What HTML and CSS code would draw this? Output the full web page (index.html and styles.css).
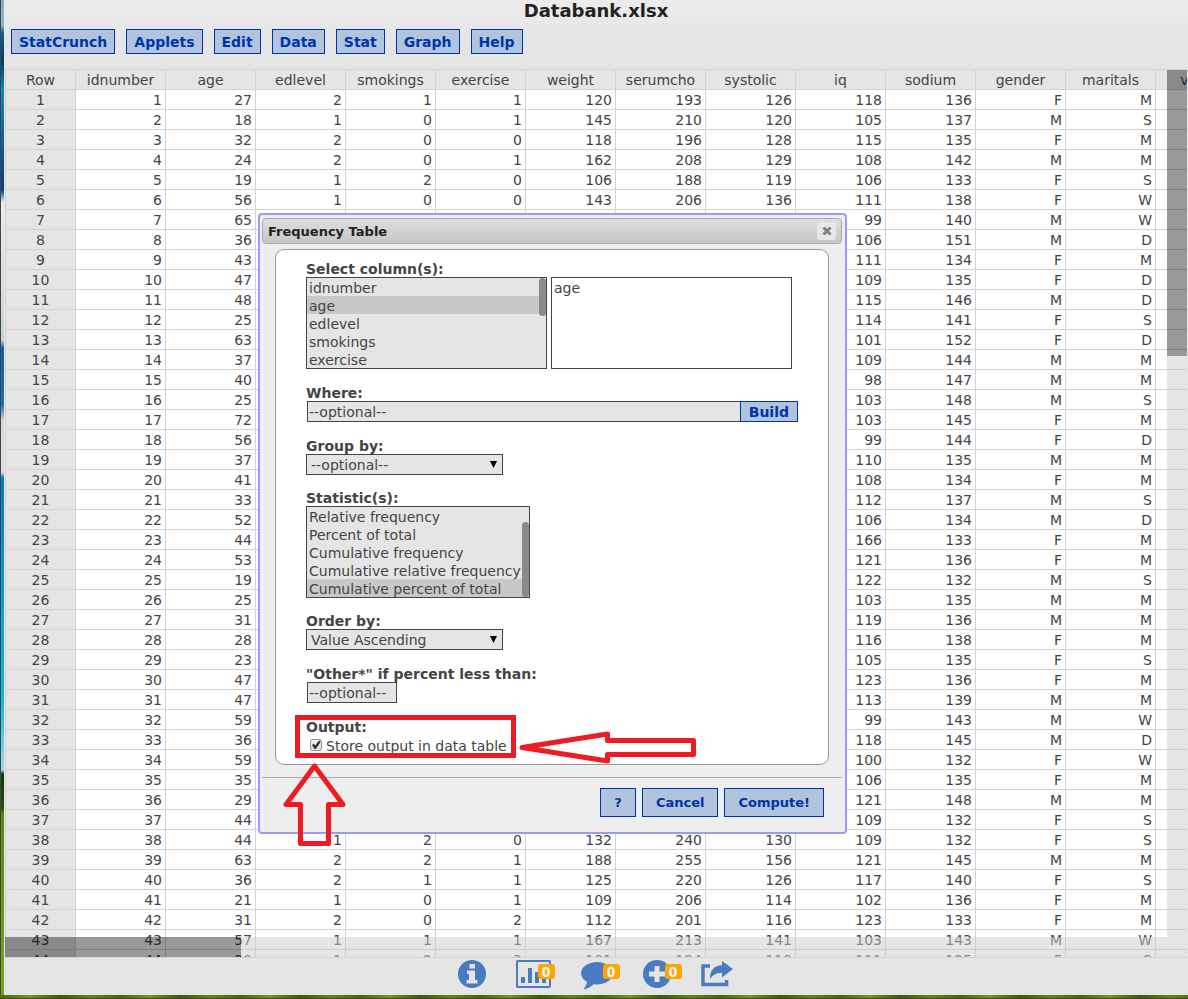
FILE: index.html
```html
<!DOCTYPE html>
<html lang="en">
<head>
<meta charset="utf-8">
<title>Databank.xlsx</title>
<link rel="stylesheet" href="styles.css">
</head>
<body>
<main class="window">
  <header class="header">
    <h1 class="title">Databank.xlsx</h1>
    <nav class="toolbar" aria-label="Main menu">
      <button class="btn" type="button">StatCrunch</button>
      <button class="btn" type="button">Applets</button>
      <button class="btn" type="button">Edit</button>
      <button class="btn" type="button">Data</button>
      <button class="btn" type="button">Stat</button>
      <button class="btn" type="button">Graph</button>
      <button class="btn" type="button">Help</button>
    </nav>
  </header>

  <section class="sheet" aria-label="Data">
    <table class="grid">
      <thead><tr id="grid-head"></tr></thead>
      <tbody id="grid-body"></tbody>
    </table>
    <div class="bar bar-v"><div class="thumb thumb-v"></div><div class="track"></div></div>
    <div class="bar bar-h"><div class="thumb thumb-h"></div><div class="track"></div></div>
  </section>

  <footer class="dock">
    <a class="dock-item" href="#info" aria-label="Info">
      <svg width="28" height="28" viewBox="0 0 28 28"><circle cx="14" cy="14" r="14" fill="#4a7bc0"/><path d="M11.500 4h5.500v4.500h-5.500zM9 10.500h8v9.500h2.500v3.500h-11v-3.500h2.500v-6h-2z" fill="#e5e5e5"/></svg>
    </a>
    <a class="dock-item" href="#graphs" aria-label="Graphs">
      <svg width="35" height="28" viewBox="0 0 35 28" fill="#4a7bc0"><rect x="1" y="1" width="33" height="26" rx="1" fill="none" stroke="#4a7bc0" stroke-width="2"/><path d="M5 17h4v6H5zM12 8h4v15h-4zM19 12h4v11h-4zM26 7h4v16h-4z"/></svg>
      <span class="badge">0</span>
    </a>
    <a class="dock-item" href="#comments" aria-label="Comments">
      <svg width="32" height="30" viewBox="0 0 32 30"><path d="M16 2C7.200 2 0 7 0 13.200c0 3.600 2.400 6.600 6 8.600-.4 2.800-1.600 5-3.600 7.400 4.200-.4 7.600-2.400 10.200-5 1.100.2 2.200.2 3.400.2 8.800 0 16-5 16-11.200S24.800 2 16 2z" fill="#4a7bc0"/></svg>
      <span class="badge">0</span>
    </a>
    <a class="dock-item" href="#add" aria-label="Add">
      <svg width="28" height="28" viewBox="0 0 28 28"><circle cx="14" cy="14" r="14" fill="#4a7bc0"/><path d="M11.500 6h5v5.500H22v5h-5.500V22h-5v-5.500H6v-5h5.500z" fill="#e5e5e5"/></svg>
      <span class="badge">0</span>
    </a>
    <a class="dock-item" href="#share" aria-label="Share">
      <svg width="32" height="28" viewBox="0 0 32 28"><path d="M9 6H2v18.500h23.500V20" fill="none" stroke="#4a7bc0" stroke-width="3.500"/><path d="M21 1l11 8-11 8.500v-4.500c-6 0-9.500 1.800-12 6.500C8.500 11 13 5.500 21 5.300z" fill="#4a7bc0"/></svg>
    </a>
  </footer>
</main>

<form class="dialog" role="dialog" aria-labelledby="dialog-title">
  <div class="dialog-bar">
    <h2 class="dialog-title" id="dialog-title">Frequency Table</h2>
    <button class="close" type="button" aria-label="Close">
      <svg width="10" height="10" viewBox="0 0 10 10"><path d="M1.500 1.500l7 7M8.500 1.500l-7 7" stroke="#808080" stroke-width="3"/></svg>
    </button>
  </div>

  <div class="panel">
    <div class="field">
      <label class="label" for="columns">Select column(s):</label>
      <div class="lists">
        <div class="list-box list-wide">
          <select class="list" id="columns" multiple size="5">
            <option>idnumber</option><option selected>age</option><option>edlevel</option><option>smokings</option><option>exercise</option><option>weight</option><option>serumcho</option><option>systolic</option><option>iq</option><option>sodium</option><option>gender</option><option>maritals</option>
          </select>
          <span class="list-thumb list-thumb-top"></span>
        </div>
        <div class="list-box list-wide">
          <select class="list list-chosen" multiple size="5" aria-label="Chosen columns">
            <option>age</option>
          </select>
        </div>
      </div>
    </div>

    <div class="field">
      <label class="label" for="where">Where:</label>
      <div class="where">
        <input class="input where-input" id="where" type="text" value="--optional--">
        <button class="btn build" type="button">Build</button>
      </div>
    </div>

    <div class="field field-tight">
      <label class="label" for="group">Group by:</label>
      <div class="menu"><select class="menu-select" id="group"><option>--optional--</option></select></div>
    </div>

    <div class="field field-tight">
      <label class="label" for="stats">Statistic(s):</label>
      <div class="list-box list-stats">
        <select class="list" id="stats" multiple size="5">
          <option>Frequency</option><option>Relative frequency</option><option>Percent of total</option><option>Cumulative frequency</option><option>Cumulative relative frequency</option><option selected>Cumulative percent of total</option>
        </select>
        <span class="list-thumb list-thumb-bottom"></span>
      </div>
    </div>

    <div class="field">
      <label class="label" for="order">Order by:</label>
      <div class="menu"><select class="menu-select" id="order"><option>Value Ascending</option></select></div>
    </div>

    <div class="field">
      <label class="label" for="other">"Other*" if percent less than:</label>
      <input class="input other-input" id="other" type="text" value="--optional--">
    </div>

    <div class="field">
      <span class="label">Output:</span>
      <label class="store"><input class="check" type="checkbox" checked>Store output in data table</label>
    </div>
  </div>

  <div class="actions">
    <button class="btn action" type="button">?</button>
    <button class="btn action" type="button">Cancel</button>
    <button class="btn action" type="button">Compute!</button>
  </div>

  <svg class="marks" width="585" height="617" viewBox="260 215 585 617" aria-hidden="true">
    <g fill="none" stroke="#ed1c24" stroke-width="5">
      <rect x="297.500" y="717.500" width="216" height="38"/>
      <path d="M314.500 766L286 804.500h14.500v39h28v-39H343z" stroke-linejoin="round"/>
      <path d="M522 747.500l85.500-13.500v6.500h86v14h-86v6.500z" stroke-linejoin="round"/>
    </g>
  </svg>
</form>
<script src="script.js"></script>
</body>
</html>
```
FILE: styles.css
```css
* { box-sizing: border-box; }

body {
  margin: 0;
  height: 100vh;
  padding: 0 0 4px 4px;
  overflow: hidden;
  position: relative;
  color: #444;
  font: 14px/18px "DejaVu Sans", Verdana, sans-serif;
  background:
    linear-gradient(#444, #444) left bottom / 100% 1px no-repeat,
    linear-gradient(90deg, #3f6a0c, #6c9a14, #345c08, #5c8c12, #3f6a0c) left bottom / 120px 4px repeat-x,
    linear-gradient(#444, #444) left top / 1px 100% no-repeat,
    linear-gradient(#7fb0c8 0, #8fb8cc 25px, #0a6a9c 32px, #083468 60px, #0c88b4 90px, #1270b0 120px, #0a3a78 190px, #e8ecee 202px, #c8d4d8 340px, #0a60b0 348px, #1a70b8 405px, #d0d8dc 420px, #e0e0e0 472px, #0a78c0 478px, #08a0d8 600px, #10b8e0 700px, #a0d8e8 770px, #14380a 774px, #2a4a08 808px, #5c8810 814px, #7aa81c 100%);
}

button, select, input { font: inherit; color: inherit; margin: 0; }

.window {
  height: 100%;
  display: flex;
  flex-direction: column;
  background: #e5e5e5;
}

.header {
  flex: none;
  padding: 0 7px 15px;
  background: linear-gradient(#ececec, #e5e5e5 40px);
}

.title {
  margin: 0 0 8px;
  font-size: 18px;
  line-height: 21px;
  text-align: center;
  color: #222;
}

.toolbar { display: flex; gap: 11px; }

.btn {
  height: 25px;
  padding: 0 7px;
  border: 1px solid #0033aa;
  border-radius: 0;
  background: #b0c4de;
  color: #0033aa;
  font-weight: bold;
  line-height: 18px;
}

.sheet {
  flex: 1;
  min-height: 0;
  margin: 0 1px;
  overflow: hidden;
  position: relative;
  border-top: 1px solid #d3d3d3;
  border-bottom: 1px solid #d3d3d3;
  background: #fff;
}

.grid {
  width: 1151px;
  min-width: 100%;
  table-layout: fixed;
  border-collapse: separate;
  border-spacing: 0;
}

.grid th, .grid td {
  width: 90px;
  height: 20px;
  padding: 2px 3px 0 0;
  border: solid #d3d3d3;
  border-width: 0 1px 1px 0;
  text-align: right;
  line-height: 17px;
  font-weight: normal;
}

.grid thead th { height: 20px; }

.grid th {
  padding: 2px 0 0;
  text-align: center;
  background: #e5e5e5;
}

.grid th:first-child { width: 71px; border-left-width: 1px; }

.bar { position: absolute; display: flex; }
.bar-v { top: 0; right: 0; bottom: 20px; width: 20px; flex-direction: column; }
.bar-h { left: 0; right: 0; bottom: 0; height: 20px; }
.track { flex: 1; background: rgba(204, 204, 204, 0.5); }
.thumb { flex: none; background: rgba(0, 0, 0, 0.4); }
.thumb-v { height: 33%; }
.thumb-h { width: 20%; }

.dock {
  flex: none;
  height: 37px;
  padding: 2px 2px 0 0;
  display: flex;
  justify-content: center;
  gap: 30px;
}

.dock-item { position: relative; display: block; height: 28px; text-decoration: none; }
.dock-item svg { display: block; }

.badge {
  position: absolute;
  top: 4px;
  left: 22px;
  width: 17px;
  border-radius: 3px;
  background: #ffa500;
  color: #fff;
  font-family: "Open Sans", "DejaVu Sans", sans-serif;
  font-size: 15px;
  font-weight: bold;
  line-height: 15px;
  text-align: center;
}

.dialog {
  position: absolute;
  left: 258px;
  top: 213px;
  width: 589px;
  padding: 3px 3px 15px 2px;
  border: 2px solid #9999ff;
  border-radius: 4px;
  background: #eee;
}

.dialog-bar {
  display: flex;
  align-items: center;
  justify-content: space-between;
  height: 26px;
  padding: 0 5px;
  border: 1px solid #aaa;
  border-radius: 4px;
  background: linear-gradient(#dedede, #c6c6c6);
}

.dialog-title { margin: 0; padding-top: 2px; font-size: 13px; line-height: 18px; color: #222; }

.close {
  display: flex;
  align-items: center;
  justify-content: center;
  width: 19px;
  height: 18px;
  padding: 0;
  border: 0;
  border-radius: 3px;
  background: #e8e8e8;
}

.panel {
  margin: 5px 13px 12px;
  padding: 10px 30px 8px;
  border: 1px solid #999;
  border-radius: 9px;
  background: #fff;
}

.field { margin-bottom: 15px; }
.field-tight { margin-bottom: 14px; }
.field:last-child { margin-bottom: 0; }

.label { display: block; margin-bottom: -2px; font-weight: bold; line-height: 19px; }

.lists { display: flex; gap: 4px; }

.list-box { position: relative; }
.list-wide { width: 241px; }
.list-stats { width: 224px; }

.list {
  display: block;
  width: 100%;
  height: 92px;
  padding: 0;
  border: 1px solid #444;
  border-radius: 0;
  outline: 0;
  background: #e5e5e5;
  overflow-y: auto;
  scrollbar-width: none;
}

.list option { padding: 2px 2px 0; height: 18px; min-height: 18px; line-height: 16px; }
.list option:checked { background: #c8c8c8 linear-gradient(#c8c8c8, #c8c8c8); color: #444; }
.list-chosen { background: #fff; }

.list-thumb {
  position: absolute;
  right: 1px;
  width: 7px;
  border-radius: 4px;
  background: #8a8a8a;
  pointer-events: none;
}

.list-thumb-top { top: 1px; height: 38px; }
.list-thumb-bottom { bottom: 1px; height: 75px; }

.input {
  display: block;
  height: 21px;
  margin-left: 1px;
  padding: 0 1px;
  border: 1px solid #444;
  border-radius: 0;
  background: #e5e5e5;
}

.where { display: flex; }
.where-input { flex: 1; min-width: 0; }
.build { height: 21px; margin-left: -1px; padding: 0 8px; }
.other-input { width: 90px; }

.menu { position: relative; width: 197px; }

.menu::after {
  content: "";
  position: absolute;
  top: 7px;
  right: 6px;
  width: 7px;
  height: 7px;
  background: #000;
  clip-path: polygon(0 0, 100% 0, 50% 100%);
  pointer-events: none;
}

.menu-select {
  display: block;
  appearance: none;
  width: 100%;
  height: 21px;
  padding: 0 4px;
  border: 1px solid #444;
  border-radius: 0;
  background: #e5e5e5;
}

.store { display: flex; align-items: center; gap: 4px; padding: 1px 0 0 4px; line-height: 20px; white-space: nowrap; }

.check {
  appearance: none;
  width: 12px;
  height: 12px;
  margin-bottom: 2px;
  border: 1px solid #999;
  border-radius: 2px;
  background: linear-gradient(#eee, #ddd);
}

.check:checked::before {
  content: "";
  display: block;
  width: 10px;
  height: 10px;
  background: #333;
  clip-path: polygon(10% 50%, 28% 38%, 42% 55%, 80% 5%, 98% 18%, 48% 90%, 35% 90%);
}

.actions {
  display: flex;
  justify-content: flex-end;
  gap: 6px;
  padding: 10px 18px 0;
  border-top: 1px solid #aaa;
}

.action { height: 29px; padding: 0 13px; font-size: 13px; }

.marks { position: absolute; left: 0; top: 0; overflow: visible; pointer-events: none; }
```
FILE: script.js
```js
const columns = ["Row", "idnumber", "age", "edlevel", "smokings", "exercise", "weight",
  "serumcho", "systolic", "iq", "sodium", "gender", "maritals", "var14"];

// age, edlevel, smokings, exercise, weight, serumcho, systolic, iq, sodium, gender, maritals
const rows = `27 2 1 1 120 193 126 118 136 F M
18 1 0 1 145 210 120 105 137 M S
32 2 0 0 118 196 128 115 135 F M
24 2 0 1 162 208 129 108 142 M M
19 1 2 0 106 188 119 106 133 F S
56 1 0 0 143 206 136 111 138 F W
65 - - - - - - 99 140 M W
36 - - - - - - 106 151 M D
43 - - - - - - 111 134 F M
47 - - - - - - 109 135 F D
48 - - - - - - 115 146 M D
25 - - - - - - 114 141 F S
63 - - - - - - 101 152 F D
37 - - - - - - 109 144 M M
40 - - - - - - 98 147 M M
25 - - - - - - 103 148 M S
72 - - - - - - 103 145 F M
56 - - - - - - 99 144 F D
37 - - - - - - 110 135 M M
41 - - - - - - 108 134 F M
33 - - - - - - 112 137 M S
52 - - - - - - 106 134 M D
44 - - - - - - 166 133 F M
53 - - - - - - 121 136 F M
19 - - - - - - 122 132 M S
25 - - - - - - 103 135 M M
31 - - - - - - 119 136 M M
28 - - - - - - 116 138 F M
23 - - - - - - 105 135 F S
47 - - - - - - 123 136 F M
47 - - - - - - 113 139 M M
59 - - - - - - 99 143 M W
36 - - - - - - 118 145 M D
59 - - - - - - 100 132 F W
35 - - - - - - 106 135 F M
29 - - - - - - 121 148 M M
44 - - - - - - 109 132 F S
44 1 2 0 132 240 130 109 132 F S
63 2 2 1 188 255 156 121 145 M M
36 2 1 1 125 220 126 117 140 F S
21 1 0 1 109 206 114 102 136 F M
31 2 0 2 112 201 116 123 133 F M
57 1 1 1 167 213 141 103 143 M W
20 1 2 3 101 194 110 111 125 F S`.split("\n").map((line) => line.split(" "));

function cell(tag, text) {
  const el = document.createElement(tag);
  el.textContent = text === "-" ? "" : text;
  return el;
}

document.getElementById("grid-head").append(...columns.map((name) => cell("th", name)));

document.getElementById("grid-body").append(...rows.map((values, i) => {
  const tr = document.createElement("tr");
  tr.append(cell("th", i + 1), cell("td", i + 1), ...values.map((v) => cell("td", v)), cell("td", ""));
  return tr;
}));

const stats = document.getElementById("stats");
stats.scrollTop = stats.scrollHeight;
```
